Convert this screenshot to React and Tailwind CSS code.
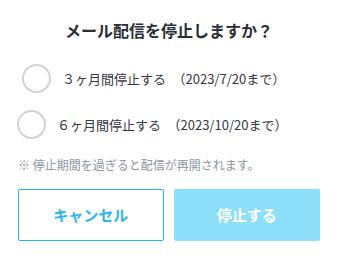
import React from "react";

export default function App() {
  const font = { fontFamily: '"Noto Sans CJK JP", "Noto Sans", sans-serif' };
  return (
    <div className="w-[338px] h-[259px] bg-white flex flex-col" style={font}>
      <h1 className="pt-[18px] text-center text-[16px] leading-[24px] font-bold text-[#2a2e37]">
        メール配信を停止しますか？
      </h1>
      <div className="mt-[22px] flex flex-col gap-[17px]">
        <label className="flex items-center ml-[22px]">
          <span className="w-[29px] h-[29px] rounded-full border-2 border-[#cfd3dc] shrink-0" />
          <span className="ml-[11px] text-[13px] leading-[18px] text-[#343844]">
            ３ヶ月間停止する　（2023/7/20まで）
          </span>
        </label>
        <label className="flex items-center ml-[17px]">
          <span className="w-[29px] h-[29px] rounded-full border-2 border-[#cfd3dc] shrink-0" />
          <span className="ml-[11px] text-[13px] leading-[18px] text-[#343844]">
            ６ヶ月間停止する　（2023/10/20まで）
          </span>
        </label>
      </div>
      <p className="mt-[17px] px-[18px] text-[12px] leading-[18px] text-[#8c95a3]">
        ※ 停止期間を過ぎると配信が再開されます。
      </p>
      <div className="mt-[15px] px-[18px] flex gap-[10px]">
        <button className="w-[146px] h-[52px] rounded-[2px] border border-[#1ebcee] bg-white text-[15px] font-bold text-[#2db4ef]">
          キャンセル
        </button>
        <button className="w-[147px] h-[52px] rounded-[2px] bg-[#8ddff9] text-[15px] font-bold text-white">
          停止する
        </button>
      </div>
    </div>
  );
}
